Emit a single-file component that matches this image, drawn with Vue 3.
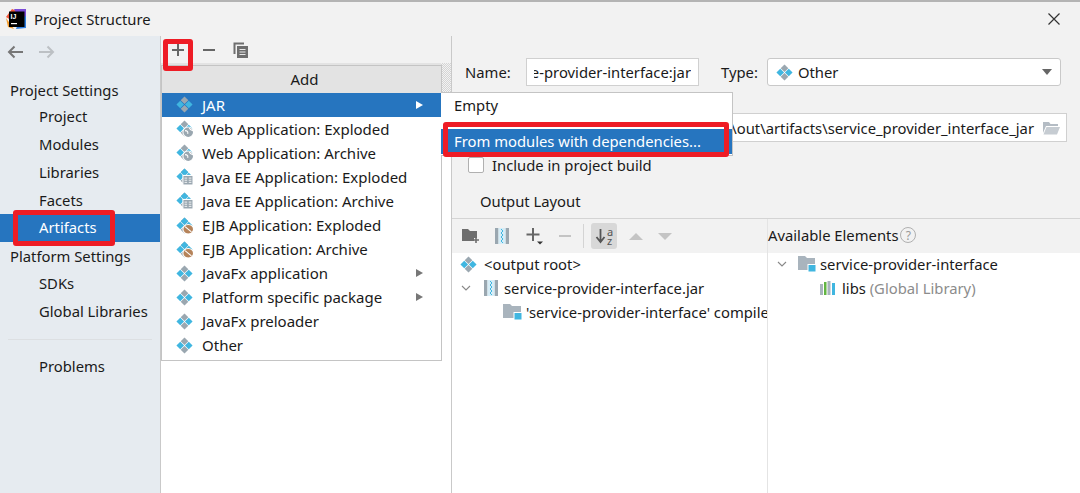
<script setup>
const sideItems = [
  { label: 'Project Settings', head: true },
  { label: 'Project' },
  { label: 'Modules' },
  { label: 'Libraries' },
  { label: 'Facets' },
  { label: 'Artifacts', active: true },
  { label: 'Platform Settings', head: true },
  { label: 'SDKs' },
  { label: 'Global Libraries' },
]
const addItems = [
  { label: 'JAR', active: true, arrow: true },
  { label: 'Web Application: Exploded', badge: 'web' },
  { label: 'Web Application: Archive', badge: 'web' },
  { label: 'Java EE Application: Exploded', badge: 'ee' },
  { label: 'Java EE Application: Archive', badge: 'ee' },
  { label: 'EJB Application: Exploded', badge: 'ejb' },
  { label: 'EJB Application: Archive', badge: 'ejb' },
  { label: 'JavaFx application', arrow: true },
  { label: 'Platform specific package', arrow: true },
  { label: 'JavaFx preloader' },
  { label: 'Other' },
]
const grayDiamonds = 'M8 .4l3.600 3.600L8 7.600 4.400 4z M8 8.400l3.600 3.600L8 15.600 4.400 12z'
const blueDiamonds = 'M4 4.400L7.600 8 4 11.600.4 8z M12 4.400L15.600 8 12 11.600 8.400 8z'
</script>

<template>
  <div class="window">
    <div class="under-text"></div>
    <div class="title-bar">
      <svg class="logo" width="20" height="20" viewBox="0 0 20 20">
        <path d="M0 8 L6 0 L13 3 L8 13Z" fill="#f0563a" />
        <path d="M8 0 L20 0 L20 10 L12 8Z" fill="#7b4bd6" />
        <path d="M0 9 L8 20 L2 18Z" fill="#f59e2e" />
        <path d="M14 10 L20 7 L20 19 L10 20Z" fill="#2f7fe0" />
        <rect x="3" y="2.500" width="15.500" height="15.500" fill="#000" />
        <text x="4.600" y="10" font-size="7" font-weight="700" fill="#fff" font-family="Liberation Sans, sans-serif">IJ</text>
        <rect x="5" y="14" width="6" height="1.200" fill="#fff" />
      </svg>
      <span class="title">Project Structure</span>
      <svg class="close" width="14" height="14" viewBox="0 0 14 14">
        <path d="M1.500 1.500 L12.500 12.500 M12.500 1.500 L1.500 12.500" stroke="#333" stroke-width="1.200" fill="none" />
      </svg>
    </div>

    <div class="body">
      <aside class="sidebar">
        <div class="nav-arrows">
          <svg width="16" height="14" viewBox="0 0 16 14"><path d="M16 7H2M7.500 1.500 2 7l5.500 5.500" stroke="#777" stroke-width="2" fill="none" /></svg>
          <svg width="16" height="14" viewBox="0 0 16 14"><path d="M0 7H14M8.500 1.500 14 7l-5.500 5.500" stroke="#bcc0c4" stroke-width="2" fill="none" /></svg>
        </div>
        <div
          v-for="item in sideItems"
          :key="item.label"
          class="side-item"
          :class="{ head: item.head, active: item.active }"
        >{{ item.label }}</div>
        <div class="side-sep"></div>
        <div class="side-item">Problems</div>
      </aside>

      <section class="middle">
        <div class="mid-toolbar">
          <svg width="14" height="14" viewBox="0 0 14 14"><path d="M7 1V13M1 7H13" stroke="#666" stroke-width="2" /></svg>
          <svg width="14" height="14" viewBox="0 0 14 14"><path d="M1 7H13" stroke="#666" stroke-width="2" /></svg>
          <svg width="16" height="16" viewBox="0 0 16 16">
            <path d="M1.500 12V1.500H11" stroke="#6e6e6e" stroke-width="2" fill="none" />
            <rect x="4" y="4" width="11" height="12" fill="#6e6e6e" />
            <path d="M6.500 7.500h6M6.500 10h6M6.500 12.500h6" stroke="#e8e8e8" stroke-width="1" />
          </svg>
        </div>
        <div class="mid-head"><span class="dither"></span></div>
        <div class="mid-list"></div>
      </section>

      <section class="right">
        <div class="form">
          <div class="form-row first">
            <label class="lbl-name">Name:</label>
            <div class="input name-input"><div class="name-clip"><span>e-provider-interface:jar</span></div></div>
            <label class="lbl-type">Type:</label>
            <div class="combo">
              <svg class="art" width="17" height="17" viewBox="0 0 16 16">
                <path :d="grayDiamonds" fill="#9aa7b0" />
                <path :d="blueDiamonds" fill="#40b6e0" />
              </svg>
              <span class="combo-text">Other</span>
              <span class="caret"></span>
            </div>
          </div>
          <div class="form-row second">
            <div class="input path-input">
              <span class="path-text">\out\artifacts\service_provider_interface_jar</span>
              <svg width="18" height="14" viewBox="0 0 18 14">
                <path d="M1 1h6l1.500 2H16v2H4L1 12z" fill="#b4bcc4" />
                <path d="M4.500 6H18l-3 7.500H1.500z" fill="#c6ccd2" />
              </svg>
            </div>
          </div>
          <div class="check-row">
            <span class="checkbox"></span>
            <span>Include in project build</span>
          </div>
          <div class="layout-title">Output Layout</div>
        </div>

        <div class="split">
          <div class="split-left">
            <div class="tools">
              <svg class="t-folder" width="18" height="16" viewBox="0 0 18 16">
                <path d="M0 1h6l2 2h7v7h-3v3H0z" fill="#6e6e6e" />
                <path d="M14 9v6M11 12h6" stroke="#6e6e6e" stroke-width="1.600" />
              </svg>
              <svg class="t-jar" width="14" height="16" viewBox="0 0 14 16">
                <rect x="0" y="0" width="3.500" height="16" fill="#9aa7b0" />
                <rect x="10.500" y="0" width="3.500" height="16" fill="#9aa7b0" />
                <path d="M3.500 0h7v16h-7z" fill="#d6edf7" />
                <path d="M6 1l2 2-2 2 2 2-2 2 2 2-2 2 2 2" stroke="#40b6e0" stroke-width="1" fill="none" />
              </svg>
              <svg class="t-plus" width="18" height="18" viewBox="0 0 18 18">
                <path d="M7 1V14M0.500 7.500H13.500" stroke="#666" stroke-width="2" />
                <path d="M11 14.500h6l-3 3z" fill="#333" />
              </svg>
              <svg class="t-minus" width="14" height="14" viewBox="0 0 14 14"><path d="M1 7H13" stroke="#c4c4c4" stroke-width="2" /></svg>
              <span class="tool-sep"></span>
              <span class="sort-btn">
                <svg width="11" height="15" viewBox="0 0 11 15"><path d="M5.500 0V12M1.500 8l4 5 4-5" stroke="#555" stroke-width="1.800" fill="none" /></svg>
                <span class="az">a<br />z</span>
              </span>
              <span class="tri up"></span>
              <span class="tri down"></span>
            </div>
            <div class="tree">
              <div class="tree-row lvl0">
                <svg class="art" width="17" height="17" viewBox="0 0 16 16">
                  <path :d="grayDiamonds" fill="#9aa7b0" />
                  <path :d="blueDiamonds" fill="#40b6e0" />
                </svg>
                <span>&lt;output root&gt;</span>
              </div>
              <div class="tree-row lvl1">
                <svg class="chev" width="10" height="6" viewBox="0 0 10 6"><path d="M1 1l4 4 4-4" stroke="#888" stroke-width="1.100" fill="none" /></svg>
                <svg class="jar" width="14" height="16" viewBox="0 0 14 16">
                  <rect x="0" y="0" width="3.500" height="16" fill="#9aa7b0" />
                  <rect x="10.500" y="0" width="3.500" height="16" fill="#9aa7b0" />
                  <path d="M3.500 0h7v16h-7z" fill="#d6edf7" />
                  <path d="M6 1l2 2-2 2 2 2-2 2 2 2-2 2 2 2" stroke="#40b6e0" stroke-width="1" fill="none" />
                </svg>
                <span>service-provider-interface.jar</span>
              </div>
              <div class="tree-row lvl2">
                <svg width="19" height="16" viewBox="0 0 19 16">
                  <path d="M0 0h7l2 2h9v12H0z" fill="#a9b4bd" />
                  <rect x="11" y="8.500" width="8" height="7.500" fill="#40b6e0" stroke="#fff" stroke-width="1" />
                </svg>
                <span>'service-provider-interface' compile</span>
              </div>
            </div>
          </div>
          <div class="split-right">
            <div class="avail-head">
              <span>Available Elements</span>
              <span class="help">?</span>
            </div>
            <div class="tree">
              <div class="tree-row rlvl0">
                <svg class="chev" width="10" height="6" viewBox="0 0 10 6"><path d="M1 1l4 4 4-4" stroke="#888" stroke-width="1.100" fill="none" /></svg>
                <svg class="rfolder" width="18" height="16" viewBox="0 0 18 16">
                  <path d="M0 0h7l2 2h8v12H0z" fill="#a9b4bd" />
                  <rect x="10" y="8.500" width="8" height="7.500" fill="#40b6e0" stroke="#fff" stroke-width="1" />
                </svg>
                <span>service-provider-interface</span>
              </div>
              <div class="tree-row rlvl1">
                <svg width="17" height="14" viewBox="0 0 17 14">
                  <rect x="0" y="3" width="3" height="11" fill="#a9b4bd" />
                  <rect x="4" y="1" width="2.500" height="13" fill="#62b543" />
                  <rect x="7.500" y="0" width="3" height="14" fill="#a9b4bd" />
                  <rect x="12" y="2" width="3" height="12" fill="#40b6e0" />
                </svg>
                <span>libs <span class="muted">(Global Library)</span></span>
              </div>
            </div>
          </div>
        </div>
      </section>
    </div>

    <div class="menu add-menu">
      <div class="menu-title">Add</div>
      <div
        v-for="item in addItems"
        :key="item.label"
        class="menu-item"
        :class="{ active: item.active }"
      >
        <svg class="art" width="17" height="17" viewBox="0 0 16 16">
          <path :d="grayDiamonds" fill="#9aa7b0" />
          <path :d="blueDiamonds" fill="#40b6e0" />
          <template v-if="item.badge === 'web'">
            <circle cx="11.500" cy="11.500" r="5" fill="#9aa7b0" stroke="#fff" />
            <path d="M8.500 10c2 0 3 1 2.500 3M12.500 7.500c1 2 2 2 3.500 2.500" stroke="#fff" fill="none" />
          </template>
          <template v-if="item.badge === 'ee'">
            <path d="M8 .4l3.600 3.600L8 7.600 4.400 4z" fill="#40b6e0" />
            <rect x="6.500" y="7" width="9.500" height="9" fill="#9aa7b0" stroke="#fff" />
            <path d="M8 9.500h2.500M8 11.500h2.500M8 13.500h2.500M12 9.500h2.500M12 11.500h2.500M12 13.500h2.500" stroke="#fff" stroke-width=".8" />
          </template>
          <template v-if="item.badge === 'ejb'">
            <path d="M8 .4l3.600 3.600L8 7.600 4.400 4z" fill="#40b6e0" />
            <ellipse cx="11.500" cy="11.500" rx="5" ry="4.500" fill="#b5835a" stroke="#fff" />
            <path d="M8.500 9l6 5" stroke="#fff" />
          </template>
        </svg>
        <span class="menu-label">{{ item.label }}</span>
        <span v-if="item.arrow" class="menu-arrow"></span>
      </div>
    </div>

    <div class="menu sub-menu">
      <div class="sub-item">Empty</div>
      <div class="sub-gap"></div>
      <div class="sub-item active">From modules with dependencies...</div>
    </div>

    <div class="mark mark-plus"></div>
    <div class="mark mark-artifacts"></div>
    <div class="mark mark-modules"></div>
  </div>
</template>

<style>
html, body { margin: 0; padding: 0; background: #f2f2f2; overflow: hidden; }
</style>

<style scoped>
.window {
  position: relative;
  width: 1080px;
  height: 493px;
  overflow: hidden;
  display: flex;
  flex-direction: column;
  background: #f2f2f2;
  color: #1a1a1a;
  font-family: "Noto Sans", "Open Sans", sans-serif;
  font-size: 14.800px;
  border-top: 2px solid #b4b4b4;
  box-sizing: border-box;
}
.window svg { flex: none; }
.under-text {
  position: absolute;
  left: 218px;
  top: -2px;
  width: 46px;
  height: 1px;
  background: repeating-linear-gradient(90deg, #6a3d9a 0 6px, transparent 6px 9px);
}
.title-bar {
  height: 34px;
  flex: none;
  display: flex;
  align-items: center;
  padding: 0 19px 0 6px;
  background: #f2f2f2;
}
.title { margin-left: 8px; }
.close { margin-left: auto; }
.body { flex: 1; display: flex; min-height: 0; }
.sidebar {
  width: 160px;
  flex: none;
  background: #e6ebf0;
  border-right: 1px solid #c9c9c9;
}
.nav-arrows {
  height: 39.500px;
  display: flex;
  gap: 16px;
  padding: 9px 0 0 7px;
  box-sizing: border-box;
  align-items: flex-start;
}
.side-item {
  height: 27.750px;
  line-height: 27.750px;
  padding-left: 39px;
}
.side-item.head { padding-left: 10px; line-height: 29px; }
.side-item.active { background: #2675bf; color: #fff; }
.side-sep {
  height: 1px;
  background: #dcdfe2;
  margin: 14px 8px 13px;
}
.middle {
  width: 290px;
  flex: none;
  border-right: 1px solid #c9c9c9;
  display: flex;
  flex-direction: column;
}
.mid-toolbar {
  height: 27px;
  flex: none;
  display: flex;
  align-items: center;
  gap: 17px;
  padding-left: 10px;
}
.mid-head {
  height: 29px;
  flex: none;
  display: flex;
  justify-content: flex-end;
  background: #e3e3e3;
}
.dither {
  width: 10px;
  background: repeating-conic-gradient(#d4d4d4 0 25%, #f2f2f2 0 50%) 0 0 / 2px 2px;
}
.mid-list { flex: 1; background: #fff; }
.right { flex: 1; min-width: 0; display: flex; flex-direction: column; }
.form { height: 183px; flex: none; border-bottom: 1px solid #d4d4d4; box-sizing: border-box; }
.form-row { display: flex; align-items: center; }
.form-row.first { padding: 22px 0 0 13px; height: 50px; box-sizing: border-box; }
.lbl-type { margin: 0 9px 0 22px; }
.lbl-name { width: 61px; }
.input {
  background: #fff;
  border: 1px solid #d0d0d0;
  box-sizing: border-box;
  height: 28px;
  display: flex;
  align-items: center;
  overflow: hidden;
}
.name-input { width: 173px; padding: 0 7px 0 7px; white-space: nowrap; }
.name-clip { flex: 1; min-width: 0; overflow: hidden; display: flex; justify-content: flex-end; }
.name-clip span { flex: none; }
.combo {
  width: 294px;
  height: 28px;
  box-sizing: border-box;
  background: #fff;
  border: 1px solid #c9c9c9;
  border-radius: 3px;
  display: flex;
  align-items: center;
  padding: 0 8px 0 8px;
  gap: 5px;
}
.caret {
  margin-left: auto;
  border-left: 5.500px solid transparent;
  border-right: 5.500px solid transparent;
  border-top: 6px solid #666;
}
.form-row.second { justify-content: flex-end; padding: 27px 13px 0 0; }
.path-input { width: 345px; height: 29px; justify-content: flex-end; padding-right: 6px; gap: 8px; white-space: nowrap; }
.check-row { display: flex; align-items: center; gap: 8px; margin: 15px 0 0 16px; height: 16px; }
.checkbox {
  width: 16px;
  height: 16px;
  box-sizing: border-box;
  background: #fff;
  border: 1px solid #b0b0b0;
  border-radius: 2px;
}
.layout-title { margin: 18px 0 0 28px; line-height: 20px; }
.split { flex: 1; display: flex; min-height: 0; }
.split-left {
  width: 315px;
  flex: none;
  display: flex;
  flex-direction: column;
  border-right: 1px solid #e4e4e4;
  overflow: hidden;
}
.split-right { flex: 1; display: flex; flex-direction: column; min-width: 0; }
.tools {
  height: 34px;
  flex: none;
  display: flex;
  align-items: center;
  padding-left: 10px;
}
.t-jar { margin-left: 15px; }
.t-plus { margin-left: 17px; }
.t-minus { margin-left: 14px; }
.tool-sep { width: 1px; height: 24px; background: #d4d4d4; margin-left: 11px; }
.sort-btn {
  width: 26px;
  height: 26px;
  background: #d8d8d8;
  border-radius: 3px;
  display: flex;
  align-items: center;
  justify-content: center;
  gap: 1px;
  margin-left: 7px;
}
.az { font-size: 11px; line-height: 9px; color: #555; }
.tri { width: 0; height: 0; border-left: 7.500px solid transparent; border-right: 7.500px solid transparent; }
.tri.up { border-bottom: 7px solid #c4c4c4; margin-left: 12px; }
.tri.down { border-top: 7px solid #c4c4c4; margin-left: 15px; }
.tree { flex: 1; background: #fff; }
.tree-row {
  height: 24px;
  padding-bottom: 2px;
  box-sizing: border-box;
  display: flex;
  align-items: center;
  white-space: nowrap;
}
.lvl0 { padding-left: 8px; gap: 7px; }
.lvl1 { padding-left: 9px; }
.lvl1 .jar { margin: 0 6px 0 13px; }
.lvl2 { padding-left: 51px; gap: 4px; }
.rlvl0 { padding-left: 9px; }
.rfolder { margin: 0 4px 0 11px; }
.rlvl1 { padding-left: 52px; gap: 5px; }
.muted { color: #8c8c8c; }
.avail-head {
  height: 34px;
  flex: none;
  display: flex;
  align-items: center;
  gap: 2px;
  padding-bottom: 2px;
  box-sizing: border-box;
}
.help {
  width: 16px;
  height: 16px;
  border: 1px solid #b0b0b0;
  border-radius: 50%;
  color: #999;
  font-size: 12px;
  display: flex;
  align-items: center;
  justify-content: center;
  box-sizing: border-box;
}
.menu {
  position: absolute;
  background: #fff;
  border: 1px solid #c4c4c4;
  box-sizing: border-box;
  font-size: 15px;
}
.add-menu { left: 161px; top: 63px; width: 281px; height: 296px; }
.menu-title {
  height: 26.500px;
  line-height: 26px;
  text-align: center;
  padding-left: 6px;
  background: #e3e3e3;
}
.menu-item {
  height: 24.100px;
  display: flex;
  align-items: center;
  padding: 0 18px 0 14px;
  gap: 9px;
}
.menu-item.active { background: #2675bf; color: #fff; }
.menu-arrow {
  margin-left: auto;
  border-top: 4.500px solid transparent;
  border-bottom: 4.500px solid transparent;
  border-left: 7px solid #777;
}
.menu-item.active .menu-arrow { border-left-color: #fff; }
.sub-menu { left: 441px; top: 90px; width: 292px; height: 64px; border-left: none; font-size: 14.800px; }
.sub-item { height: 25px; line-height: 25px; padding-left: 13px; }
.sub-gap { height: 11px; }
.sub-item.active { background: #2675bf; color: #fff; }
.mark {
  position: absolute;
  border: 5px solid #ee1c25;
  border-radius: 3px;
  box-sizing: border-box;
}
.mark-plus { left: 163px; top: 37px; width: 30px; height: 32px; }
.mark-artifacts { left: 13px; top: 208px; width: 102px; height: 36px; }
.mark-modules { left: 443px; top: 120px; width: 286px; height: 35px; }
</style>
